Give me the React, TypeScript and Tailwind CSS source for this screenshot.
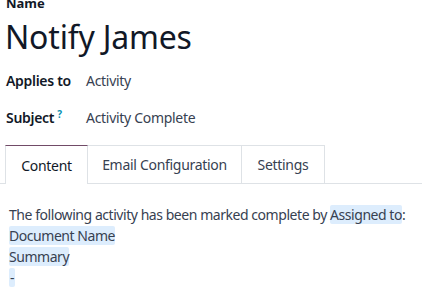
import React from "react";

export default function App() {
  const font = { fontFamily: '"Noto Sans", "Open Sans", sans-serif' };
  return (
    <div className="w-[422px] h-[306px] overflow-hidden bg-white text-[#1f2937]" style={font}>
      <div className="pl-[6px] -mt-[6px]">
        <div className="text-[13px] font-bold leading-[18px] text-[#111827]">Name</div>
        <div className="mt-[3px] text-[32px] leading-[44px] text-[#111827] -ml-[1px] tracking-[-0.2px]">Notify James</div>
        <div className="mt-[13px] grid grid-cols-[80px_1fr] gap-y-[19px] text-[14px] leading-[18px] tracking-[-0.3px]">
          <div className="font-semibold text-[#111827]">Applies to</div>
          <div className="text-[#374151]">Activity</div>
          <div className="font-semibold text-[#111827]">
            Subject<sup className="ml-[3px] text-[#0891b2] font-bold text-[10px]">?</sup>
          </div>
          <div className="text-[#374151]">Activity Complete</div>
        </div>
      </div>
      <div className="mt-[18px] flex border-b border-[#dee2e6]">
        <div className="w-[5px]" />
        <div className="flex text-[14px] text-[#374151] tracking-[-0.3px]">
          <div className="-mb-px h-[39px] w-[83px] flex items-center justify-center border-t border-t-[#714b67] border-x border-x-[#dee2e6] bg-white text-[#111827]">
            Content
          </div>
          <div className="h-[38px] w-[154px] flex items-center justify-center border-t border-r border-[#dee2e6]">
            Email Configuration
          </div>
          <div className="h-[38px] w-[83px] flex items-center justify-center border-t border-r border-[#dee2e6]">
            Settings
          </div>
        </div>
      </div>
      <div className="pl-[9px] pt-[20px] text-[14px] leading-[21px] text-[#374151] tracking-[-0.45px] whitespace-nowrap">
        <div>
          The following activity has been marked complete by{" "}
          <span className="bg-[#ddedfd] rounded-[2px]">Assigned to</span>:
        </div>
        <div><span className="bg-[#ddedfd] rounded-[2px]">Document Name</span></div>
        <div><span className="bg-[#ddedfd] rounded-[2px]">Summary</span></div>
        <div><span className="bg-[#ddedfd] rounded-[2px] px-[1px]">-</span></div>
      </div>
    </div>
  );
}
